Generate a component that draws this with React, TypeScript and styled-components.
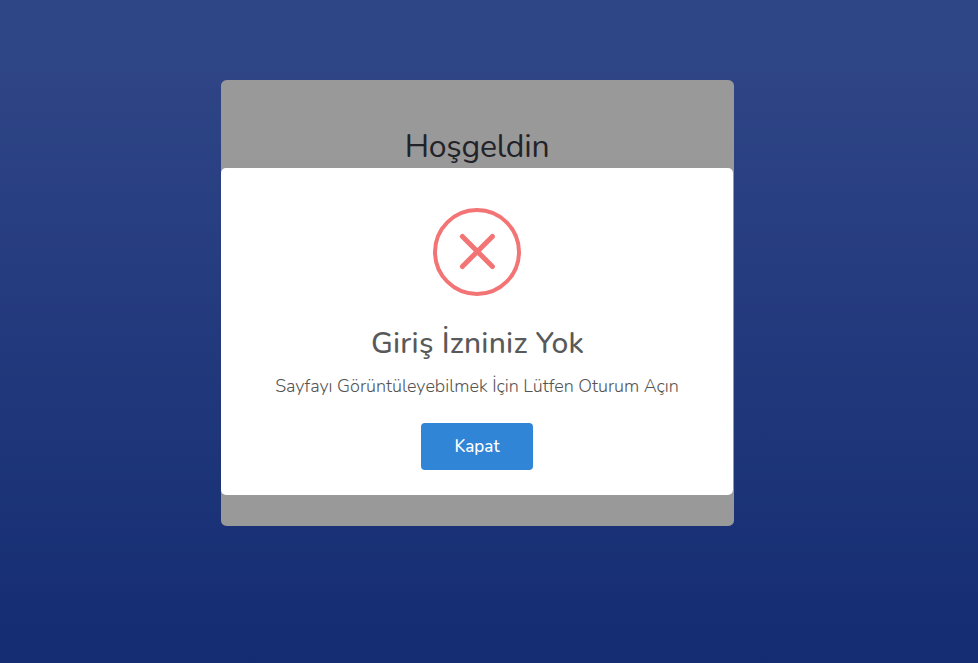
import React from "react";
import styled, { createGlobalStyle } from "styled-components";

const GlobalStyle = createGlobalStyle`
  * { box-sizing: border-box; }
  body { margin: 0; overflow: hidden; }
`;

const Page = styled.main`
  height: 663px;
  padding: 80px 244px 0 221px;
  background: linear-gradient(180deg, #4e73df 10%, #224abe 100%);
  font-family: Nunito, Lato, sans-serif;
`;

const Card = styled.section`
  height: 446px;
  padding: 47px 1px 0 0;
  border-radius: 5.6px;
  background: #fff;
  text-align: center;
`;

const Heading = styled.h1`
  margin: 0;
  color: #3a3b45;
  font-size: 32px;
  font-weight: 400;
  letter-spacing: -0.25px;
  line-height: 40px;
`;

const Backdrop = styled.div`
  position: fixed;
  inset: 0;
  display: flex;
  justify-content: center;
  align-items: center;
  padding-right: 24px;
  background: rgba(0, 0, 0, 0.4);
  font-family: Nunito, Lato, sans-serif;
`;

const Dialog = styled.div`
  display: flex;
  flex-direction: column;
  align-items: center;
  width: 512px;
  height: 327px;
  padding-top: 40px;
  border-radius: 5px;
  background: #fff;
`;

const ErrorIcon = styled.svg`
  display: block;
  width: 88px;
  height: 88px;
  flex: none;
`;

const Title = styled.h2`
  margin: 28px 0 0;
  padding-left: 1px;
  color: #595959;
  font-size: 30px;
  font-weight: 530;
  letter-spacing: 0.23px;
  line-height: 40px;
  white-space: nowrap;
`;

const Message = styled.p`
  margin: 9px 0 0;
  color: #545454;
  font-size: 18px;
  font-weight: 300;
  letter-spacing: -0.02px;
  line-height: 26px;
  white-space: nowrap;
`;

const CloseButton = styled.button`
  width: 112px;
  height: 47px;
  margin-top: 24px;
  padding: 0;
  border: 0;
  border-radius: 4px;
  background: #3085d6;
  color: #fff;
  font-family: inherit;
  font-size: 17px;
  font-weight: 500;
`;

export default function App() {
  return (
    <>
      <GlobalStyle />
      <Page>
        <Card>
          <Heading>Hoşgeldin</Heading>
        </Card>
      </Page>
      <Backdrop>
        <Dialog role="dialog" aria-modal="true">
          <ErrorIcon viewBox="0 0 88 88" fill="none" stroke="#f27474">
            <circle cx="44" cy="44" r="42" strokeWidth="4" />
            <path d="M29.4 28.5 59.4 58.5M59.4 28.5 29.4 58.5" strokeWidth="5" strokeLinecap="round" />
          </ErrorIcon>
          <Title>Giriş İzniniz Yok</Title>
          <Message>Sayfayı Görüntüleyebilmek İçin Lütfen Oturum Açın</Message>
          <CloseButton>Kapat</CloseButton>
        </Dialog>
      </Backdrop>
    </>
  );
}
